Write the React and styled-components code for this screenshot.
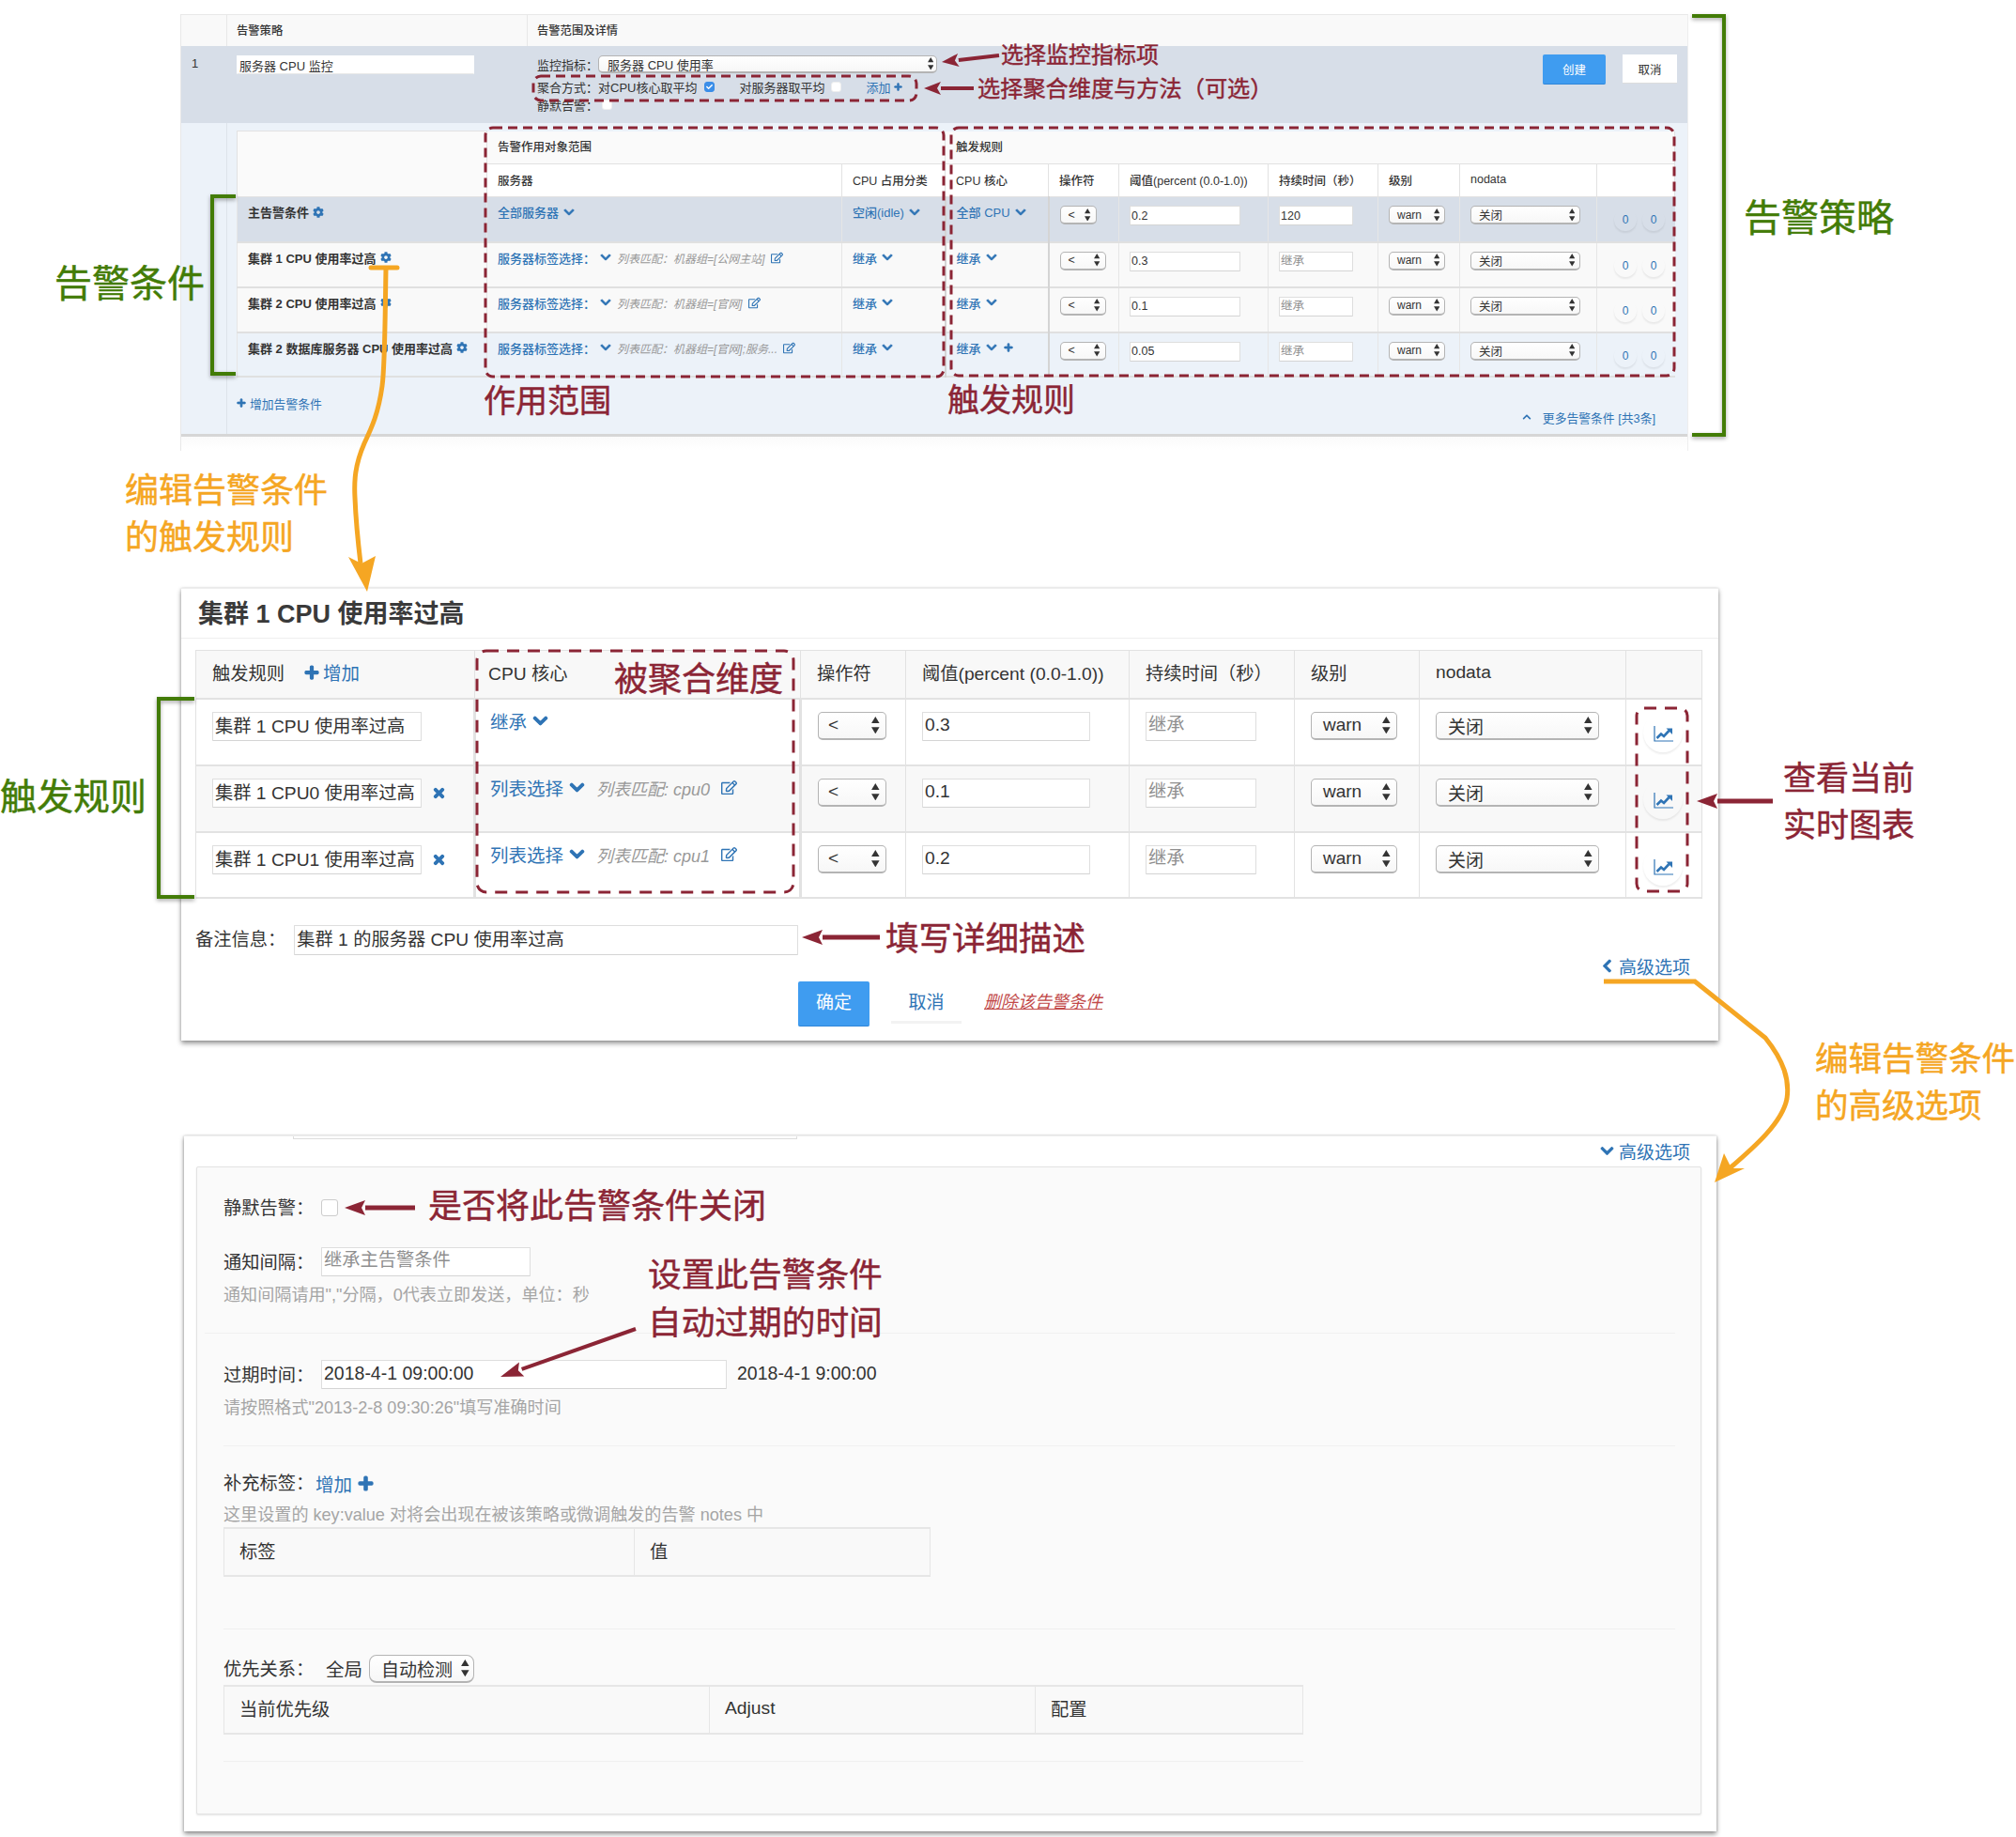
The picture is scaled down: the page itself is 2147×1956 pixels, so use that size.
import React from 'react';
import styled, { createGlobalStyle } from 'styled-components';
import { FaCog, FaChevronDown, FaChevronLeft, FaChevronUp, FaPlus, FaTimes, FaRegEdit, FaCheck } from 'react-icons/fa';

const BLUE = '#2f74b5';
const RED = '#8b2535';
const GREEN = '#437c07';
const ORANGE = '#f5a623';
const LINE = '#e2e2e2';

const GlobalStyle = createGlobalStyle`
  html, body { margin: 0; padding: 0; background: #fff; }
  body {
    font-family: "Liberation Sans", "Noto Sans CJK SC", sans-serif;
    color: #333;
  }
  * { box-sizing: border-box; }
  input { font-family: inherit; color: #333; outline: none; }
  input::placeholder { color: #8f8f8f; opacity: 1; }
`;

const Page = styled.div`
  position: relative;
  width: 2147px;
  height: 1956px;
  overflow: hidden;
  padding: 15px 0 0 192px;
  display: flex;
  flex-direction: column;
  align-items: flex-start;
`;

const Chevron = styled(FaChevronDown)`
  flex: none;
  stroke: currentColor;
  stroke-width: 36;
`;
const ChevronBack = styled(FaChevronLeft)`
  flex: none;
  stroke: currentColor;
  stroke-width: 36;
`;
const Plus = styled(FaPlus)`
  flex: none;
  stroke: currentColor;
  stroke-width: 40;
`;

/* ---------- top overview panel ---------- */
const TopPanel = styled.div`
  width: 1606px;
  height: 465px;
  font-size: 13px;
  border-top: 1px solid #e8e8e8;
  border-left: 1px solid #e8e8e8;
  border-right: 1px solid #eee;
`;
const StrategyGrid = styled.div`
  display: grid;
  grid-template-columns: 49px 320px 1fr;
  height: ${p => p.$h}px;
  background: ${p => p.$bg};
`;
const HeadCell = styled.div`
  padding: 7px 0 0 10px;
  font-size: 12.3px;
  font-weight: 500;
  border-right: 1px solid #e8e8e8;
  &:last-child { border-right: 0; }
`;
const IndexCell = styled.div`
  padding: 11px 0 0 11px;
`;
const NameCell = styled.div`
  padding: 10px 0 0 10px;
`;
const DetailCell = styled.div`
  position: relative;
  padding: 10px 0 0 10px;
`;
const FormLine = styled.div`
  display: flex;
  align-items: center;
  height: ${p => p.$h || 18}px;
  margin-bottom: ${p => p.$mb || 0}px;
`;
const Gap = styled.span`
  display: inline-block;
  flex: none;
  width: ${p => p.$w}px;
`;
const TopButtons = styled.div`
  position: absolute;
  top: 9px;
  right: 11px;
  display: flex;
  gap: 18px;
`;
const CreateBtn = styled.div`
  width: 67px;
  height: 32px;
  display: flex;
  align-items: center;
  justify-content: center;
  background: #3f9cf0;
  color: #fff;
  font-size: 12.5px;
  border-bottom: 1px solid #2f86d8;
  border-radius: 2px;
`;
const PlainBtn = styled.div`
  width: 58px;
  height: 31px;
  display: flex;
  align-items: center;
  justify-content: center;
  background: #fff;
  color: #333;
  font-size: 12.5px;
  border-bottom: 1px solid #ddd;
`;
const DetailArea = styled.div`
  height: 334px;
  display: grid;
  grid-template-columns: 49px 1fr;
  background: #ecf2f9;
  border-bottom: 3px solid #d6d6d6;
`;
const IndexRail = styled.div`
  border-right: 1px solid #dde3ea;
`;
const DetailBody = styled.div`
  padding: 8px 0 0 10px;
`;
const MiniTable = styled.table`
  width: 1531px;
  table-layout: fixed;
  border-collapse: collapse;
  font-size: 13px;
`;
const MiniHeadRow = styled.tr`
  height: 35px;
  background: ${p => p.$bg || '#fff'};
`;
const MiniRow = styled.tr`
  height: ${p => p.$h}px;
  background: ${p => p.$bg};
  border-bottom: 2px solid #e0e0e0;
`;
const MiniTh = styled.th`
  padding: 0 0 2px 11px;
  text-align: left;
  font-size: 12.5px;
  font-weight: 500;
  border: 1px solid ${LINE};
  border-top: 0;
`;
const MiniBlank = styled.th`
  background: #fafafa;
  border: 1px solid ${LINE};
`;
const MiniTd = styled.td`
  padding: 6px 0 0 11px;
  vertical-align: top;
  white-space: nowrap;
  border-left: 1px solid ${p => (p.$strong ? '#d4d4d4' : '#e6e6e6')};
  border-left-width: ${p => (p.$strong ? 2 : 1)}px;
`;
const CellLine = styled.div`
  display: flex;
  align-items: center;
  height: 19px;
`;
const RowTitle = styled.span`
  font-weight: 700;
`;
const SmallLink = styled.span`
  color: ${BLUE};
  font-weight: 500;
  display: inline-flex;
  align-items: center;
  gap: ${p => p.$gap ?? 5}px;
  svg { flex: none; }
`;
const MatchText = styled.span`
  color: #999;
  font-style: italic;
  font-size: ${p => p.$size || 12}px;
  margin: 0 ${p => p.$gap || 6}px;
`;
const ControlCell = styled.div`
  margin-top: 3px;
`;
const TableFoot = styled.div`
  display: flex;
  justify-content: space-between;
  padding-right: 34px;
`;
const FootLink = styled.span`
  color: ${BLUE};
  font-size: 12.8px;
  display: inline-flex;
  align-items: center;
  gap: 4px;
  margin-top: ${p => p.$top}px;
`;
const Round = styled.span`
  display: inline-flex;
  align-items: center;
  justify-content: center;
  width: ${p => p.$d || 24}px;
  height: ${p => p.$d || 24}px;
  border-radius: 50%;
  color: ${BLUE};
  font-size: 12px;
  box-shadow: 0 2px 2px rgba(0, 0, 0, 0.07);
`;
const RoundPair = styled.div`
  display: flex;
  gap: 6px;
  margin: 6px 0 0 7px;
`;
const TopTail = styled.div`
  height: 14px;
  background: linear-gradient(#fafafa, #fff);
`;

/* ---------- shared form bits ---------- */
const Box = styled.input`
  width: ${p => p.$w}px;
  height: ${p => p.$h}px;
  font-size: ${p => p.$fs}px;
  padding: 0 ${p => p.$pad || 2}px ${p => (p.$fs > 15 ? 3 : 0)}px;
  background: #fff;
  border: 1px solid ${p => (p.$soft ? '#fff' : '#dedede')};
  border-bottom-color: ${p => (p.$soft ? '#e8e8e8' : '#d4d4d4')};
  border-radius: 1px;
`;
const SelectShell = styled.div`
  display: inline-flex;
  align-items: center;
  justify-content: space-between;
  width: ${p => p.$w}px;
  height: ${p => p.$h}px;
  font-size: ${p => p.$fs}px;
  padding: 0 ${p => p.$pr || 4}px 0 ${p => p.$pl || 10}px;
  color: #333;
  background: linear-gradient(#fff, #f7f7f7);
  border: 1px solid #b4b4b4;
  border-bottom-width: 2px;
  border-radius: ${p => p.$r || 5}px;
`;
const Check = styled.span`
  display: inline-flex;
  align-items: center;
  justify-content: center;
  flex: none;
  width: ${p => p.$d}px;
  height: ${p => p.$d}px;
  border-radius: 3px;
  background: ${p => (p.$on ? '#3b8ee8' : '#fff')};
  border: 1px solid ${p => (p.$on ? '#3b8ee8' : p.$line || '#eee')};
  color: #fff;
`;

function Updown({ size = 5 }) {
  return (
    <svg width={size * 1.6} height={size * 3.4} viewBox="0 0 6 13" fill="#333" style={{ flex: 'none' }}>
      <path d="M3 0 6 5H0z" />
      <path d="M3 13 0 8h6z" />
    </svg>
  );
}

function Select({ w, h, fs, big, children, pl, pr, r }) {
  return (
    <SelectShell $w={w} $h={h} $fs={fs} $pl={pl} $pr={pr} $r={r}>
      <span>{children}</span>
      <Updown size={big ? 5.4 : 4} />
    </SelectShell>
  );
}

function ChartIcon() {
  return (
    <svg width="21" height="17" viewBox="0 0 21 17" fill="none" stroke={BLUE}>
      <path d="M1 0V16H21" strokeWidth="1.2" />
      <path d="M3.5 13 8 8.5 11 11 16.5 5" strokeWidth="2.6" />
      <path d="M13.5 2.5h6.5v6.5z" fill={BLUE} stroke="none" />
    </svg>
  );
}

/* ---------- edit panel ---------- */
const EditPanel = styled.div`
  margin: 146px 0 0 1px;
  width: 1637px;
  height: 482px;
  background: #fff;
  border-top: 1px solid #eee;
  box-shadow: 0 3px 5px rgba(0, 0, 0, 0.42), 1px 0 2px rgba(0, 0, 0, 0.08), -1px 0 2px rgba(0, 0, 0, 0.08);
`;
const PanelTitle = styled.div`
  height: 53px;
  padding: 0 0 4px 18px;
  display: flex;
  align-items: center;
  font-size: 27px;
  font-weight: 700;
  color: #3a3a3a;
  border-bottom: 1px solid #eee;
`;
const RuleTable = styled.table`
  margin: 12px 0 0 15px;
  width: 1604px;
  table-layout: fixed;
  border-collapse: collapse;
  font-size: 19.25px;
`;
const RuleHead = styled.tr`
  height: 51px;
  background: #f8f8f8;
`;
const RuleRow = styled.tr`
  height: ${p => p.$h}px;
  background: ${p => p.$bg};
`;
const RuleTh = styled.th`
  text-align: left;
  font-weight: 400;
  padding: 0 0 4px ${p => p.$pl || 17}px;
  border: 1px solid ${LINE};
  border-bottom-width: 2px;
`;
const RuleTd = styled.td`
  vertical-align: top;
  padding: 13px 0 0 ${p => p.$pl ?? 17}px;
  white-space: nowrap;
  border: 1px solid ${LINE};
  border-left-width: ${p => p.$thick || 1}px;
  border-bottom-width: 2px;
`;
const AddLink = styled.span`
  color: ${BLUE};
  display: inline-flex;
  align-items: center;
  gap: ${p => p.$gap ?? 4}px;
  margin-left: ${p => p.$ml || 0}px;
  font-size: ${p => p.$fs || 19.5}px;
  svg { flex: none; }
`;
const FlexCell = styled.div`
  display: flex;
  align-items: center;
  gap: 11px;
`;
const RemoveIcon = styled(FaTimes)`
  color: ${BLUE};
  stroke: currentColor;
  stroke-width: 40;
`;
const RuleLinkLine = styled.div`
  display: flex;
  align-items: center;
  height: 22px;
  margin-top: -1px;
`;
const ChartCell = styled.div`
  display: flex;
  justify-content: center;
  margin: 1px 2px 0 0;
`;
const ChartButton = styled(Round)`
  padding-top: 4px;
`;
const NoteRow = styled.div`
  display: flex;
  align-items: center;
  margin: 28px 0 0 15px;
  font-size: 19.25px;
  gap: 9px;
  span { margin-top: -3px; }
`;
const AdvRow = styled.div`
  height: ${p => p.$h}px;
  display: flex;
  align-items: center;
  justify-content: flex-end;
  padding: 0 ${p => p.$pr}px 5px 0;
  color: ${BLUE};
  font-size: 19px;
  gap: 5px;
`;
const ActionRow = styled.div`
  display: flex;
  padding-left: 657px;
  height: 48px;
  font-size: 19px;
`;
const PrimaryBtn = styled.div`
  width: 76px;
  height: 48px;
  padding-bottom: 6px;
  display: flex;
  align-items: center;
  justify-content: center;
  background: #3f9cf0;
  color: #fff;
  border-bottom: 1px solid #2f86d8;
  border-radius: 2px;
`;
const CancelLink = styled.div`
  margin-left: 23px;
  width: 75px;
  height: 45px;
  display: flex;
  align-items: center;
  justify-content: center;
  color: ${BLUE};
  border-bottom: 3px solid #f2f2f2;
`;
const DeleteLink = styled.a`
  margin-left: 24px;
  align-self: center;
  margin-top: -7px;
  color: #c24a4a;
  font-style: italic;
  font-size: 18px;
  text-decoration: underline;
`;

/* ---------- advanced options panel ---------- */
const AdvPanel = styled.div`
  margin: 101px 0 0 4px;
  width: 1632px;
  height: 741px;
  background: #fff;
  border-top: 1px solid #eee;
  box-shadow: 0 3px 5px rgba(0, 0, 0, 0.42), 1px 0 2px rgba(0, 0, 0, 0.1), -1px 0 2px rgba(0, 0, 0, 0.1);
`;
const InputRemnant = styled.div`
  margin-left: 116px;
  width: 537px;
  height: 3px;
  border: 1px solid #ddd;
  border-top: 0;
`;
const Well = styled.div`
  margin-left: 13px;
  width: 1603px;
  height: 690px;
  padding: 28px 0 0 28px;
  background: #fafafa;
  border: 1px solid #e3e3e3;
  border-radius: 2px;
  box-shadow: 0 1px 2px rgba(0, 0, 0, 0.1);
  font-size: 19.5px;
`;
const WellRow = styled.div`
  display: flex;
  align-items: center;
  height: ${p => p.$h || 31}px;
  margin-top: ${p => p.$top || 0}px;
`;
const WellLabel = styled.span`
  width: ${p => p.$w || 104}px;
  flex: none;
  white-space: nowrap;
  font-size: 19.25px;
  padding-bottom: 2px;
`;
const WellText = styled.span`
  padding-bottom: 2px;
`;
const Help = styled.div`
  height: 22px;
  line-height: 22px;
  margin-top: ${p => p.$top}px;
  color: #a5a5a5;
  font-size: 18.1px;
  white-space: nowrap;
`;
const Rule = styled.div`
  height: 1px;
  width: ${p => p.$w}px;
  margin: ${p => p.$top}px 0 0 ${p => p.$ml || 0}px;
  background: #f0f0f0;
`;
const HeadStrip = styled.div`
  display: grid;
  grid-template-columns: ${p => p.$cols};
  width: ${p => p.$w}px;
  height: 53px;
  margin-top: 2px;
  background: #f9f9f9;
  border: 1px solid #e6e6e6;
  border-top-width: 2px;
  border-bottom-width: 2px;
  font-size: 19.25px;
`;
const StripCell = styled.div`
  display: flex;
  align-items: center;
  padding: 0 0 3px 16px;
  border-left: 1px solid #e6e6e6;
  &:first-child { border-left: 0; }
`;

/* ---------- annotations over the page ---------- */
const Overlay = styled.svg`
  position: absolute;
  left: 0;
  top: 0;
  pointer-events: none;
  z-index: 2;
`;
const Bracket = styled.path`
  fill: none;
  stroke: ${GREEN};
  stroke-width: 4;
  filter: drop-shadow(0 2px 2px rgba(0, 0, 0, 0.35));
`;
const Dash = styled.rect`
  fill: none;
  stroke: ${RED};
  stroke-width: 3;
  stroke-dasharray: ${p => p.$dash || '10 6'};
`;
const Note = styled.div`
  position: absolute;
  left: ${p => p.$x}px;
  top: ${p => p.$y - p.$size * 0.75 + 2}px;
  font-size: ${p => p.$size}px;
  line-height: 1.5;
  color: ${p => p.$color};
  -webkit-text-stroke: 0.45px ${p => p.$color};
  white-space: nowrap;
  z-index: 3;
`;

function Arrow({ x1, y1, x2, y2, color = RED, width = 4, head = 18, spread = 7 }) {
  const len = Math.hypot(x2 - x1, y2 - y1);
  const ux = (x2 - x1) / len;
  const uy = (y2 - y1) / len;
  const bx = x2 - ux * head;
  const by = y2 - uy * head;
  const nx = bx + ux * 4;
  const ny = by + uy * 4;
  return (
    <g>
      <line x1={x1} y1={y1} x2={bx} y2={by} stroke={color} strokeWidth={width} />
      <polygon
        fill={color}
        points={`${x2},${y2} ${bx - uy * spread},${by + ux * spread} ${nx},${ny} ${bx + uy * spread},${by - ux * spread}`}
      />
    </g>
  );
}

function Annotations() {
  return (
    <Overlay width="2147" height="1956" viewBox="0 0 2147 1956">
      <Bracket d="M1802 17H1836V463H1802" />
      <Bracket d="M251 209H226V398H251" />
      <Bracket d="M207 744H169V955H207" />

      <Dash x="517" y="136" width="488" height="265" rx="8" />
      <Dash x="1013" y="136" width="770" height="264" rx="8" />
      <Dash x="568" y="81" width="408" height="26" rx="8" />
      <Dash x="508" y="693" width="337" height="257" rx="10" $dash="13 9" />
      <Dash x="1743" y="754" width="54" height="195" rx="8" $dash="13 9" />

      <Arrow x1={1064} y1={59} x2={1003} y2={66} />
      <Arrow x1={1037} y1={94} x2={984} y2={94} />
      <Arrow x1={937} y1={998} x2={854} y2={998} width={5} head={22} spread={8} />
      <Arrow x1={1888} y1={853} x2={1807} y2={853} width={5} head={22} spread={8} />
      <Arrow x1={442} y1={1286} x2={367} y2={1286} width={5} head={22} spread={8} />
      <Arrow x1={677} y1={1415} x2={533} y2={1466} width={4} head={24} spread={8} />

      <path d="M395 285H423" stroke={ORANGE} strokeWidth="5" fill="none" strokeLinecap="round" />
      <path
        d="M411 286C410 340 410 390 407 411C403 440 396 455 388 472C378 495 377 512 378 530C379 555 381 575 384 600"
        stroke={ORANGE}
        strokeWidth="5"
        fill="none"
      />
      <polygon fill={ORANGE} points="391,630 371,593 385,600 400,592" />

      <path
        d="M1708 1045H1805L1880 1105C1900 1130 1906 1150 1903 1170C1898 1195 1870 1220 1842 1244"
        stroke={ORANGE}
        strokeWidth="5"
        fill="none"
      />
      <polygon fill={ORANGE} points="1826,1259 1836,1228 1844,1244 1858,1244" />
    </Overlay>
  );
}

const topRows = [
  { title: '主告警条件', bg: '#d7dee8', h: 48, scope: '全部服务器', cpu: '空闲(idle)', core: '全部 CPU', thr: '0.2', dur: '120', opW: 39 },
  { title: '集群 1 CPU 使用率过高', bg: '#f9f9f9', h: 48, scope: '服务器标签选择：', match: '列表匹配：机器组=[公网主站]', cpu: '继承', core: '继承', thr: '0.3', opW: 49 },
  { title: '集群 2 CPU 使用率过高', bg: '#f9f9f9', h: 48, scope: '服务器标签选择：', match: '列表匹配：机器组=[官网]', cpu: '继承', core: '继承', thr: '0.1', opW: 49 },
  { title: '集群 2 数据库服务器 CPU 使用率过高', bg: '#ecf2f9', h: 47, scope: '服务器标签选择：', match: '列表匹配：机器组=[官网];服务...', cpu: '继承', core: '继承', thr: '0.05', opW: 49, addCore: true },
];

const ruleRows = [
  { name: '集群 1 CPU 使用率过高', bg: '#fff', h: 71, link: '继承', thr: '0.3' },
  { name: '集群 1 CPU0 使用率过高', bg: '#f8f8f8', h: 71, link: '列表选择', match: '列表匹配: cpu0', thr: '0.1', del: true },
  { name: '集群 1 CPU1 使用率过高', bg: '#fff', h: 70, link: '列表选择', match: '列表匹配: cpu1', thr: '0.2', del: true },
];

function TopOverview() {
  return (
    <TopPanel>
      <StrategyGrid $h={33} $bg="#f9f9f9">
        <HeadCell />
        <HeadCell>告警策略</HeadCell>
        <HeadCell>告警范围及详情</HeadCell>
      </StrategyGrid>
      <StrategyGrid $h={82} $bg="#d7dee8">
        <IndexCell>1</IndexCell>
        <NameCell>
          <Box $w={253} $h={20} $fs={13} $soft defaultValue="服务器 CPU 监控" />
        </NameCell>
        <DetailCell>
          <FormLine $h={19} $mb={6}>
            <span>监控指标：</span>
            <Select w={361} h={19} fs={13} pl={9} pr={3}>服务器 CPU 使用率</Select>
          </FormLine>
          <FormLine $h={17} $mb={2}>
            <span>聚合方式：</span>
            <span>对CPU核心取平均</span>
            <Gap $w={8} />
            <Check $d={11} $on><FaCheck size={7} /></Check>
            <Gap $w={26} />
            <span>对服务器取平均</span>
            <Gap $w={7} />
            <Check $d={11} />
            <Gap $w={26} />
            <AddLink $fs={13} $gap={3}>添加<Plus size={9} /></AddLink>
          </FormLine>
          <FormLine $h={16}>
            <span>静默告警：</span>
            <Gap $w={4} />
            <Check $d={11} />
          </FormLine>
          <TopButtons>
            <CreateBtn>创建</CreateBtn>
            <PlainBtn>取消</PlainBtn>
          </TopButtons>
        </DetailCell>
      </StrategyGrid>
      <DetailArea>
        <IndexRail />
        <DetailBody>
          <MiniTable>
            <colgroup>
              {[266, 378, 110, 110, 75, 159, 117, 87, 146, 83].map((w, i) => <col key={i} width={w} />)}
            </colgroup>
            <thead>
              <MiniHeadRow $bg="#fafafa">
                <MiniBlank rowSpan={2} />
                <MiniTh colSpan={2}>告警作用对象范围</MiniTh>
                <MiniTh colSpan={7}>触发规则</MiniTh>
              </MiniHeadRow>
              <MiniHeadRow>
                <MiniTh>服务器</MiniTh>
                <MiniTh>CPU 占用分类</MiniTh>
                <MiniTh>CPU 核心</MiniTh>
                <MiniTh>操作符</MiniTh>
                <MiniTh>阈值(percent (0.0-1.0))</MiniTh>
                <MiniTh>持续时间（秒）</MiniTh>
                <MiniTh>级别</MiniTh>
                <MiniTh>nodata</MiniTh>
                <MiniTh />
              </MiniHeadRow>
            </thead>
            <tbody>
              {topRows.map(r => (
                <MiniRow key={r.title} $h={r.h} $bg={r.bg}>
                  <MiniTd>
                    <CellLine>
                      <RowTitle>{r.title}</RowTitle>
                      <Gap $w={4} />
                      <SmallLink><FaCog size={12} /></SmallLink>
                    </CellLine>
                  </MiniTd>
                  <MiniTd>
                    <CellLine>
                      <SmallLink $gap={r.match ? 5 : 5}>{r.scope}<Chevron size={12} /></SmallLink>
                      {r.match && <MatchText>{r.match}</MatchText>}
                      {r.match && <SmallLink><FaRegEdit size={13} /></SmallLink>}
                    </CellLine>
                  </MiniTd>
                  <MiniTd>
                    <CellLine><SmallLink>{r.cpu}<Chevron size={12} /></SmallLink></CellLine>
                  </MiniTd>
                  <MiniTd $strong>
                    <CellLine>
                      <SmallLink>{r.core}<Chevron size={12} /></SmallLink>
                      {r.addCore && <Gap $w={7} />}
                      {r.addCore && <SmallLink><Plus size={10} /></SmallLink>}
                    </CellLine>
                  </MiniTd>
                  <MiniTd $strong><ControlCell><Select w={r.opW} h={20} fs={12.5} pl={8} pr={5}>&lt;</Select></ControlCell></MiniTd>
                  <MiniTd><ControlCell><Box $w={118} $h={21} $fs={12.5} $pad={1} defaultValue={r.thr} /></ControlCell></MiniTd>
                  <MiniTd><ControlCell><Box $w={79} $h={21} $fs={12.5} $pad={1} defaultValue={r.dur} placeholder="继承" /></ControlCell></MiniTd>
                  <MiniTd><ControlCell><Select w={60} h={20} fs={12} pl={8} pr={5}>warn</Select></ControlCell></MiniTd>
                  <MiniTd><ControlCell><Select w={117} h={20} fs={12.5} pl={8} pr={5}>关闭</Select></ControlCell></MiniTd>
                  <MiniTd>
                    <RoundPair>
                      <Round>0</Round>
                      <Round>0</Round>
                    </RoundPair>
                  </MiniTd>
                </MiniRow>
              ))}
            </tbody>
          </MiniTable>
          <TableFoot>
            <FootLink $top={3}><Plus size={10} />增加告警条件</FootLink>
            <FootLink $top={33}><FaChevronUp size={10} /><Gap $w={4} />更多告警条件 [共3条]</FootLink>
          </TableFoot>
        </DetailBody>
      </DetailArea>
      <TopTail />
    </TopPanel>
  );
}

function EditRules() {
  return (
    <EditPanel>
      <PanelTitle>集群 1 CPU 使用率过高</PanelTitle>
      <RuleTable>
        <colgroup>
          {[297, 347, 112, 238, 176, 133, 220, 81].map((w, i) => <col key={i} width={w} />)}
        </colgroup>
        <thead>
          <RuleHead>
            <RuleTh>触发规则<AddLink $ml={21}><Plus size={16} />增加</AddLink></RuleTh>
            <RuleTh $pl={14}>CPU 核心</RuleTh>
            <RuleTh>操作符</RuleTh>
            <RuleTh>阈值(percent (0.0-1.0))</RuleTh>
            <RuleTh>持续时间（秒）</RuleTh>
            <RuleTh>级别</RuleTh>
            <RuleTh>nodata</RuleTh>
            <RuleTh />
          </RuleHead>
        </thead>
        <tbody>
          {ruleRows.map(r => (
            <RuleRow key={r.name} $h={r.h} $bg={r.bg}>
              <RuleTd>
                <FlexCell>
                  <Box $w={223} $h={31} $fs={19.25} defaultValue={r.name} />
                  {r.del && <RemoveIcon size={15} />}
                </FlexCell>
              </RuleTd>
              <RuleTd $pl={15} $thick={3}>
                <RuleLinkLine>
                  <AddLink $gap={6}>{r.link}<Chevron size={17} /></AddLink>
                  {r.match && <MatchText $size={18} $gap={12}>{r.match}</MatchText>}
                  {r.match && <AddLink><FaRegEdit size={17} /></AddLink>}
                </RuleLinkLine>
              </RuleTd>
              <RuleTd $thick={3}><Select w={73} h={30} fs={19} big pl={10} pr={6}>&lt;</Select></RuleTd>
              <RuleTd><Box $w={179} $h={31} $fs={19.25} defaultValue={r.thr} /></RuleTd>
              <RuleTd><Box $w={118} $h={31} $fs={19.25} placeholder="继承" /></RuleTd>
              <RuleTd><Select w={92} h={30} fs={19} big pl={12} pr={6}>warn</Select></RuleTd>
              <RuleTd><Select w={174} h={30} fs={19} big pl={12} pr={6}>关闭</Select></RuleTd>
              <RuleTd $pl={0}>
                <ChartCell>
                  <ChartButton $d={42}><ChartIcon /></ChartButton>
                </ChartCell>
              </RuleTd>
            </RuleRow>
          ))}
        </tbody>
      </RuleTable>
      <NoteRow>
        <span>备注信息：</span>
        <Box $w={537} $h={32} $fs={19.25} defaultValue="集群 1 的服务器 CPU 使用率过高" />
      </NoteRow>
      <AdvRow $h={28} $pr={30}><ChevronBack size={15} />高级选项</AdvRow>
      <ActionRow>
        <PrimaryBtn>确定</PrimaryBtn>
        <CancelLink>取消</CancelLink>
        <DeleteLink>删除该告警条件</DeleteLink>
      </ActionRow>
    </EditPanel>
  );
}

function AdvancedOptions() {
  return (
    <AdvPanel>
      <InputRemnant />
      <AdvRow $h={29} $pr={28}><Chevron size={15} />高级选项</AdvRow>
      <Well>
        <WellRow $h={30}>
          <WellLabel>静默告警：</WellLabel>
          <Check $d={18} $line="#ccc" />
        </WellRow>
        <WellRow $top={27}>
          <WellLabel>通知间隔：</WellLabel>
          <Box $w={223} $h={31} $fs={19.25} placeholder="继承主告警条件" />
        </WellRow>
        <Help $top={9}>通知间隔请用&quot;,&quot;分隔，0代表立即发送，单位：秒</Help>
        <Rule $top={29} $w={1566} $ml={-20} />
        <WellRow $top={28}>
          <WellLabel>过期时间：</WellLabel>
          <Box $w={432} $h={31} $fs={19.5} defaultValue="2018-4-1 09:00:00" />
          <Gap $w={11} />
          <WellText>2018-4-1 9:00:00</WellText>
        </WellRow>
        <Help $top={9}>请按照格式&quot;2013-2-8 09:30:26&quot;填写准确时间</Help>
        <Rule $top={29} $w={1546} />
        <WellRow $top={24} $h={30}>
          <WellLabel $w={98}>补充标签：</WellLabel>
          <AddLink $gap={6}>增加<Plus size={17} /></AddLink>
        </WellRow>
        <Help $top={8}>这里设置的 key:value 对将会出现在被该策略或微调触发的告警 notes 中</Help>
        <HeadStrip $cols="436px 1fr" $w={753}>
          <StripCell>标签</StripCell>
          <StripCell>值</StripCell>
        </HeadStrip>
        <Rule $top={55} $w={1546} />
        <WellRow $top={27} $h={30}>
          <WellLabel $w={109}>优先关系：</WellLabel>
          <WellText>全局</WellText>
          <Gap $w={7} />
          <Select w={112} h={30} fs={19} big pl={12} pr={4} r={8}>自动检测</Select>
        </WellRow>
        <HeadStrip $cols="516px 347px 1fr" $w={1150}>
          <StripCell>当前优先级</StripCell>
          <StripCell>Adjust</StripCell>
          <StripCell>配置</StripCell>
        </HeadStrip>
        <Rule $top={28} $w={1150} />
      </Well>
    </AdvPanel>
  );
}

export default function App() {
  return (
    <Page>
      <GlobalStyle />
      <TopOverview />
      <EditRules />
      <AdvancedOptions />
      <Annotations />

      <Note $x={1066} $y={57} $size={24} $color={RED}>选择监控指标项</Note>
      <Note $x={1041} $y={93} $size={24.2} $color={RED}>选择聚合维度与方法（可选）</Note>
      <Note $x={1857} $y={230} $size={40} $color={GREEN}>告警策略</Note>
      <Note $x={58} $y={300} $size={40} $color={GREEN}>告警条件</Note>
      <Note $x={515} $y={425} $size={34} $color={RED}>作用范围</Note>
      <Note $x={1009} $y={424} $size={34} $color={RED}>触发规则</Note>
      <Note $x={133} $y={521} $size={36} $color={ORANGE}>编辑告警条件</Note>
      <Note $x={133} $y={571} $size={36} $color={ORANGE}>的触发规则</Note>
      <Note $x={654} $y={722} $size={36} $color={RED}>被聚合维度</Note>
      <Note $x={0} $y={847} $size={39} $color={GREEN}>触发规则</Note>
      <Note $x={1899} $y={827} $size={35} $color={RED}>查看当前</Note>
      <Note $x={1899} $y={877} $size={35} $color={RED}>实时图表</Note>
      <Note $x={943} $y={999} $size={35.5} $color={RED}>填写详细描述</Note>
      <Note $x={1933} $y={1127} $size={35.5} $color={ORANGE}>编辑告警条件</Note>
      <Note $x={1933} $y={1177} $size={35.5} $color={ORANGE}>的高级选项</Note>
      <Note $x={456} $y={1283} $size={36} $color={RED}>是否将此告警条件关闭</Note>
      <Note $x={690} $y={1357} $size={35.7} $color={RED}>设置此告警条件</Note>
      <Note $x={690} $y={1408} $size={35.7} $color={RED}>自动过期的时间</Note>
    </Page>
  );
}
